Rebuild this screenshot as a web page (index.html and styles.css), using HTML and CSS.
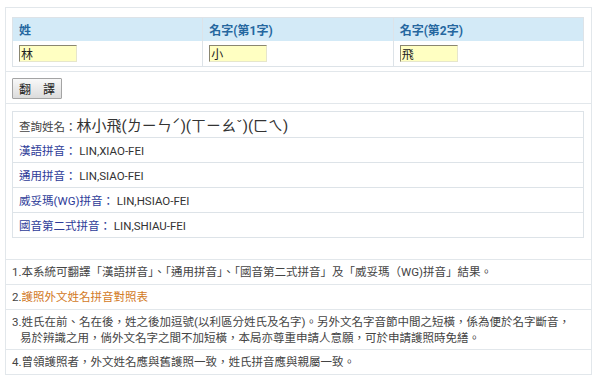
FILE: index.html
```html
<!DOCTYPE html>
<html lang="zh-Hant">
<head>
  <meta charset="UTF-8" />
  <meta name="viewport" content="width=device-width, initial-scale=1.0" />
  <title>外文姓名中譯英系統</title>
  <link rel="stylesheet" href="styles.css">
</head>
<body>

  <div class="panel">
    <div class="section form-area">
      <table class="name-table">
        <thead>
          <tr>
            <th>姓</th>
            <th>名字(第1字)</th>
            <th>名字(第2字)</th>
          </tr>
        </thead>
        <tbody>
          <tr>
            <td><input class="name-input" type="text" value="林" /></td>
            <td><input class="name-input" type="text" value="小" /></td>
            <td><input class="name-input" type="text" value="飛" /></td>
          </tr>
        </tbody>
      </table>
    </div>

    <div class="section action-bar">
      <button class="translate-btn" type="button">翻　譯</button>
    </div>

    <div class="section result-area">
      <table class="result-table">
        <tr class="query-row">
          <td><span class="query-label">查詢姓名：</span><span class="query-name">林小飛(ㄌㄧㄣˊ)(ㄒㄧㄠˇ)(ㄈㄟ)</span></td>
        </tr>
        <tr><td><span class="label">漢語拼音：</span> LIN,XIAO-FEI</td></tr>
        <tr><td><span class="label">通用拼音：</span> LIN,SIAO-FEI</td></tr>
        <tr><td><span class="label">威妥瑪(WG)拼音：</span> LIN,HSIAO-FEI</td></tr>
        <tr><td><span class="label">國音第二式拼音：</span> LIN,SHIAU-FEI</td></tr>
      </table>
    </div>

    <ol class="notes">
      <li>1.本系統可翻譯「漢語拼音」、「通用拼音」、「國音第二式拼音」及「威妥瑪（WG)拼音」結果。</li>
      <li>2.<a class="note-link" href="#">護照外文姓名拼音對照表</a></li>
      <li>3.姓氏在前、名在後，姓之後加逗號(以利區分姓氏及名字)。另外文名字音節中間之短橫，係為便於名字斷音，<br><span class="indent">易於辨識之用，倘外文名字之間不加短橫，本局亦尊重申請人意願，可於申請護照時免繕。</span></li>
      <li>4.曾領護照者，外文姓名應與舊護照一致，姓氏拼音應與親屬一致。</li>
    </ol>
  </div>

</body>
</html>
```

FILE: styles.css
```css
:root {
  --line: #e2e7eb;
  --head-bg: #d3eaf7;
  --head-text: #25679f;
  --label: #2d3b98;
  --text: #444;
  --link: #d27a1f;
}

* {
  box-sizing: border-box;
}

body {
  margin: 0;
  background: #fff;
  color: var(--text);
  font-family: Roboto, "Noto Sans CJK TC", sans-serif;
}

.panel {
  width: 587px;
  margin: 7px 0 0 5px;
  border: 1px solid var(--line);
  border-bottom: none;
}

.section {
  border-bottom: 1px solid var(--line);
}

.form-area {
  padding: 9px 7px 4px 6px;
}

.name-table {
  width: 572px;
  border-collapse: collapse;
  border: 1px solid #dde3e8;
  table-layout: fixed;
}

.name-table th {
  background: var(--head-bg);
  color: var(--head-text);
  font-size: 12px;
  font-weight: bold;
  text-align: left;
  height: 23px;
  padding: 0 6px;
  border-left: 1px solid #dde3e8;
}

.name-table td {
  height: 26px;
  padding: 0 6px;
  border-left: 1px solid #dde3e8;
}

.name-input {
  display: block;
  width: 58px;
  height: 17px;
  padding: 0 1px;
  background: #ffffc2;
  border: 1px solid #e6e6cc;
  border-top-color: #8a8670;
  border-left-color: #8a8670;
  font-family: "Noto Sans CJK TC", sans-serif;
  font-size: 12px;
  line-height: 15px;
  color: #222;
}

.action-bar {
  padding: 6px 6px 4px;
}

.translate-btn {
  display: block;
  height: 21px;
  padding: 0 6px;
  border: 1px solid #a4a4a4;
  border-radius: 1px;
  background: linear-gradient(#f8f8f8, #dcdcdc);
  font-family: "Noto Sans CJK TC", sans-serif;
  font-size: 12px;
  line-height: 19px;
  color: #222;
}

.result-area {
  padding: 7px 7px 21px 6px;
  border-bottom: none;
}

.result-table {
  width: 572px;
  border-collapse: collapse;
  border: 1px solid #dde3e8;
}

.result-table td {
  height: 25px;
  padding: 0 6px;
  border-bottom: 1px solid #dde3e8;
  font-size: 11.5px;
  color: #333;
}

.result-table .query-row td {
  height: 26px;
}

.query-label {
  color: #444;
}

.query-name {
  font-size: 15px;
  color: #333;
}

.label {
  color: var(--label);
}

.notes {
  list-style: none;
  margin: 0;
  padding: 0;
  border-top: 1px solid var(--line);
}

.notes li {
  padding: 4px 6px;
  border-bottom: 1px solid var(--line);
  font-size: 11.5px;
  line-height: 16px;
  color: var(--text);
}

.notes li:nth-child(3) {
  padding: 4px 6px 3px;
}

.notes .indent {
  padding-left: 8px;
}

.note-link {
  color: var(--link);
  text-decoration: none;
}
```
